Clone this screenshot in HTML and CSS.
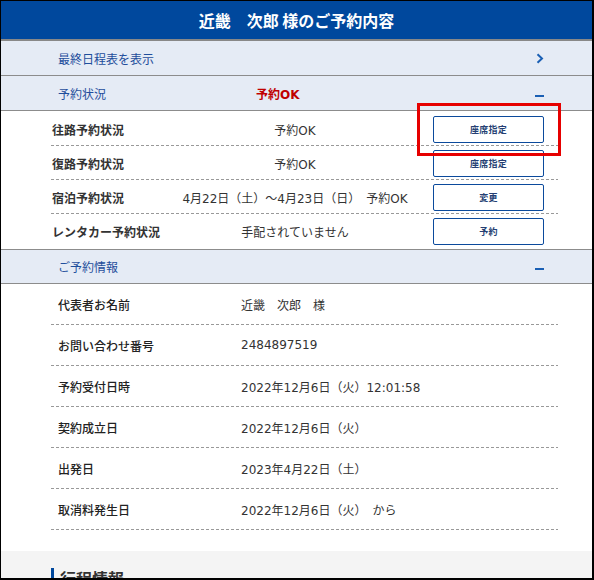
FILE: index.html
```html
<!DOCTYPE html>
<html lang="ja">
<head>
<meta charset="utf-8">
<title>ご予約内容</title>
<link rel="stylesheet" href="styles.css">
</head>
<body>
<div class="frame">
  <header class="title-bar">近畿　次郎 様のご予約内容</header>

  <a class="bar-row" href="#">
    <span class="bar-text">最終日程表を表示</span>
    <svg class="chev" width="8" height="11" viewBox="0 0 8 11"><path d="M1.5 1.2 L6 5.5 L1.5 9.8" fill="none" stroke="#1a5fb4" stroke-width="2"/></svg>
  </a>

  <div class="bar-row">
    <span class="bar-text status-label">予約状況</span>
    <span class="status-ok">予約OK</span>
    <span class="minus"></span>
  </div>

  <section class="status-list">
    <div class="status-row">
      <span class="s-label">往路予約状況</span>
      <span class="s-value">予約OK</span>
      <button class="s-btn">座席指定</button>
    </div>
    <div class="status-row">
      <span class="s-label">復路予約状況</span>
      <span class="s-value">予約OK</span>
      <button class="s-btn">座席指定</button>
    </div>
    <div class="status-row">
      <span class="s-label">宿泊予約状況</span>
      <span class="s-value">4月22日（土）～4月23日（日）　予約OK</span>
      <button class="s-btn">変更</button>
    </div>
    <div class="status-row">
      <span class="s-label">レンタカー予約状況</span>
      <span class="s-value">手配されていません</span>
      <button class="s-btn">予約</button>
    </div>
  </section>

  <div class="bar-row bar-top">
    <span class="bar-text">ご予約情報</span>
    <span class="minus"></span>
  </div>

  <section class="info-list">
    <div class="info-row"><span class="i-label">代表者お名前</span><span class="i-value">近畿　次郎　様</span></div>
    <div class="info-row"><span class="i-label">お問い合わせ番号</span><span class="i-value">2484897519</span></div>
    <div class="info-row"><span class="i-label">予約受付日時</span><span class="i-value">2022年12月6日（火）12:01:58</span></div>
    <div class="info-row"><span class="i-label">契約成立日</span><span class="i-value">2022年12月6日（火）</span></div>
    <div class="info-row"><span class="i-label">出発日</span><span class="i-value">2023年4月22日（土）</span></div>
    <div class="info-row"><span class="i-label">取消料発生日</span><span class="i-value">2022年12月6日（火）　から</span></div>
  </section>

  <section class="itinerary">
    <h2 class="it-head">行程情報</h2>
  </section>

  <div class="highlight" aria-hidden="true"></div>
</div>
</body>
</html>
```

FILE: styles.css
```css
html, body {
  margin: 0;
  padding: 0;
  background: #fff;
}
body {
  font-family: "DejaVu Sans", "Noto Sans CJK JP", sans-serif;
  font-size: 12px;
  color: #333;
}
.frame {
  position: relative;
  box-sizing: border-box;
  width: 594px;
  height: 580px;
  overflow: hidden;
  border-style: solid;
  border-color: #000;
  border-width: 1px 2px 2px 1px;
  background: #fff;
}
.title-bar {
  height: 38px;
  background: #00489d;
  color: #fff;
  font-family: "Noto Sans CJK JP", sans-serif;
  font-weight: bold;
  font-size: 16px;
  display: flex;
  align-items: center;
  justify-content: center;
  border-bottom: 2px solid #888;
}
.bar-row {
  display: flex;
  align-items: center;
  height: 35px;
  box-sizing: border-box;
  background: #e5ebf5;
  border-bottom: 1px solid #8c8c8c;
  padding: 0 48px 0 57px;
  text-decoration: none;
}
.bar-top {
  border-top: 1px solid #8c8c8c;
}
.bar-text {
  color: #1f4e9c;
  font-family: "Noto Sans CJK JP", sans-serif;
  flex: 1;
}
.status-label {
  flex: 0 0 198px;
}
.status-ok {
  color: #c00000;
  font-weight: bold;
  flex: 1;
}
.chev {
  display: block;
}
.minus {
  display: block;
  width: 9px;
  height: 2px;
  background: #1a5fb4;
  margin-top: 5px;
}
.status-list {
  padding: 1px 0 1px 50px;
  width: 507px;
}
.status-row {
  display: grid;
  grid-template-columns: 106px 276px 111px;
  align-items: center;
  height: 34px;
  box-sizing: border-box;
  padding-right: 14px;
  background-image: repeating-linear-gradient(to right, #999 0 3px, transparent 3px 5px);
  background-size: 100% 1px;
  background-repeat: no-repeat;
  background-position: left bottom;
}
.status-row:last-child {
  background-image: none;
}
.s-label {
  font-family: "Noto Sans CJK JP", sans-serif;
  font-weight: bold;
  color: #333;
  padding-left: 1px;
  white-space: nowrap;
}
.s-value {
  text-align: center;
  white-space: nowrap;
  color: #333;
}
.s-btn {
  height: 27px;
  width: 111px;
  margin: 0;
  padding: 0;
  background: #fff;
  border: 1.5px solid #0b4a9c;
  border-radius: 2px;
  font-family: "Noto Sans CJK JP", sans-serif;
  font-size: 9px;
  font-weight: bold;
  color: #253f73;
  letter-spacing: 0.3px;
}
.info-list {
  padding: 0 0 21px 50px;
  width: 507px;
}
.info-row {
  display: grid;
  grid-template-columns: 183px 1fr;
  align-items: center;
  height: 41px;
  box-sizing: border-box;
  padding-left: 7px;
  padding-bottom: 1px;
  background-image: repeating-linear-gradient(to right, #999 0 3px, transparent 3px 5px);
  background-size: 100% 1px;
  background-repeat: no-repeat;
  background-position: left bottom;
}
.i-label {
  font-family: "Noto Sans CJK JP", sans-serif;
  font-weight: 500;
  color: #222;
}
.i-value {
  color: #333;
  white-space: nowrap;
}
.itinerary {
  background: #f4f4f4;
  padding: 17px 0 0 50px;
  height: 40px;
}
.it-head {
  margin: 0;
  border-left: 3px solid #00489d;
  padding-left: 6px;
  font-family: "Noto Sans CJK JP", sans-serif;
  font-size: 16px;
  font-weight: bold;
  color: #333;
  line-height: 20px;
}
.highlight {
  position: absolute;
  left: 416px;
  top: 102px;
  width: 144px;
  height: 53px;
  box-sizing: border-box;
  border: 3px solid #e60000;
  pointer-events: none;
}
```
